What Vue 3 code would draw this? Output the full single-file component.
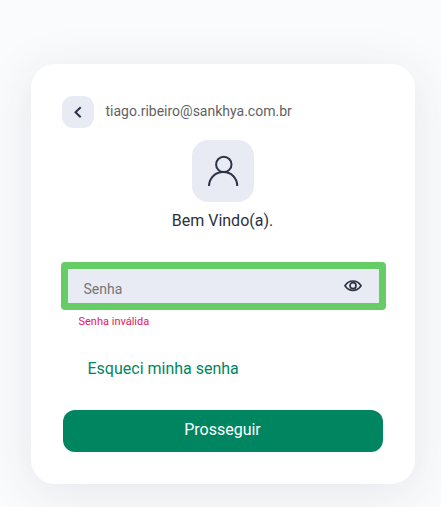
<template>
  <main class="page">
    <form class="card" @submit.prevent>
      <header class="account">
        <button type="button" class="back" aria-label="Voltar">
          <svg width="8" height="12" viewBox="0 0 8 12">
            <path d="M6.700 1.300L1.500 6.300l5.200 5" />
          </svg>
        </button>
        <span class="email">{{ email }}</span>
      </header>

      <div class="avatar">
        <svg width="32" height="32" viewBox="0 0 32 32">
          <circle cx="16.8" cy="9.4" r="7.700" />
          <path d="M2 31C2.200 22.700 8.400 17.100 16.300 17.100S30.100 22.700 30.300 31" />
        </svg>
      </div>
      <h1 class="welcome">Bem Vindo(a).</h1>

      <div class="field">
        <input
          v-model="password"
          :type="showPassword ? 'text' : 'password'"
          placeholder="Senha"
        />
        <button type="button" class="toggle" aria-label="Mostrar senha" @click="showPassword = !showPassword">
          <svg width="18" height="12" viewBox="0 0 18 12">
            <path d="M1 5.700C3 2.500 5.700 1 9 1s6 1.500 8 4.700c-2 3.200-4.700 4.700-8 4.700S3 8.900 1 5.700z" />
            <circle cx="9" cy="5.700" r="3" />
          </svg>
        </button>
      </div>
      <p class="error">Senha inválida</p>

      <a class="forgot" href="#">Esqueci minha senha</a>
      <button type="submit" class="submit">Prosseguir</button>
    </form>
  </main>
</template>

<script setup>
import { ref } from 'vue';

const email = 'tiago.ribeiro@sankhya.com.br';
const password = ref('');
const showPassword = ref(false);
</script>

<style>
body {
  margin: 0;
  overflow: hidden;
}
</style>

<style scoped>
.page {
  box-sizing: border-box;
  height: 507px;
  padding: 64px 26px 0 31px;
  overflow: hidden;
  background: #fafbfc;
  font-family: Roboto, "Liberation Sans", sans-serif;
}

.card {
  box-sizing: border-box;
  display: flex;
  flex-direction: column;
  height: 420px;
  padding: 32px;
  border-radius: 24px;
  background: #fff;
  box-shadow: 0 8px 50px rgba(43, 51, 91, 0.1);
}

button {
  padding: 0;
  border: 0;
  font-family: inherit;
  cursor: pointer;
}

svg {
  display: block;
  fill: none;
  stroke: #2b3344;
  stroke-width: 2;
}

.account {
  display: flex;
  align-items: center;
  gap: 11.5px;
  margin-left: -1px;
}

.back {
  display: flex;
  align-items: center;
  justify-content: center;
  width: 32px;
  height: 32px;
  border-radius: 11px;
  background: #e8ebf3;
}

.email {
  padding-bottom: 2px;
  color: #626262;
  font-size: 14px;
  line-height: 20px;
}

.avatar {
  display: flex;
  align-items: center;
  justify-content: center;
  width: 62px;
  height: 62px;
  margin: 12px 0 0 129px;
  border-radius: 16px;
  background: #e8ebf3;
}

.welcome {
  margin: 9px 0 0;
  padding-right: 1px;
  color: #2b3140;
  font-size: 16px;
  font-weight: 400;
  line-height: 20px;
  text-align: center;
}

.field {
  box-sizing: border-box;
  display: flex;
  align-items: center;
  width: 325px;
  height: 48px;
  margin: 31px 0 0 -2px;
  padding: 0 17px 0 15.5px;
  border: 7px solid #66cc66;
  border-radius: 4px;
  background: #e8ebf3;
}

.field input {
  flex: 1;
  min-width: 0;
  padding: 6px 0 0;
  border: 0;
  outline: 0;
  background: transparent;
  color: #2b3140;
  font-family: inherit;
  font-size: 14px;
}

.field input::placeholder {
  color: #757575;
}

.toggle {
  background: transparent;
}

.toggle svg {
  stroke-width: 1.7;
}

.error {
  margin: 5px 0 0 15.5px;
  color: #ec1458;
  font-size: 11px;
  line-height: 14px;
}

.forgot {
  align-self: flex-start;
  margin: 30px 0 0 24.5px;
  color: #008561;
  font-size: 16px;
  line-height: 20px;
  text-decoration: none;
}

.submit {
  height: 42px;
  margin-top: 31px;
  padding: 0 1px 4px 0;
  border-radius: 12px;
  background: #008561;
  color: #fff;
  font-size: 16px;
}
</style>
